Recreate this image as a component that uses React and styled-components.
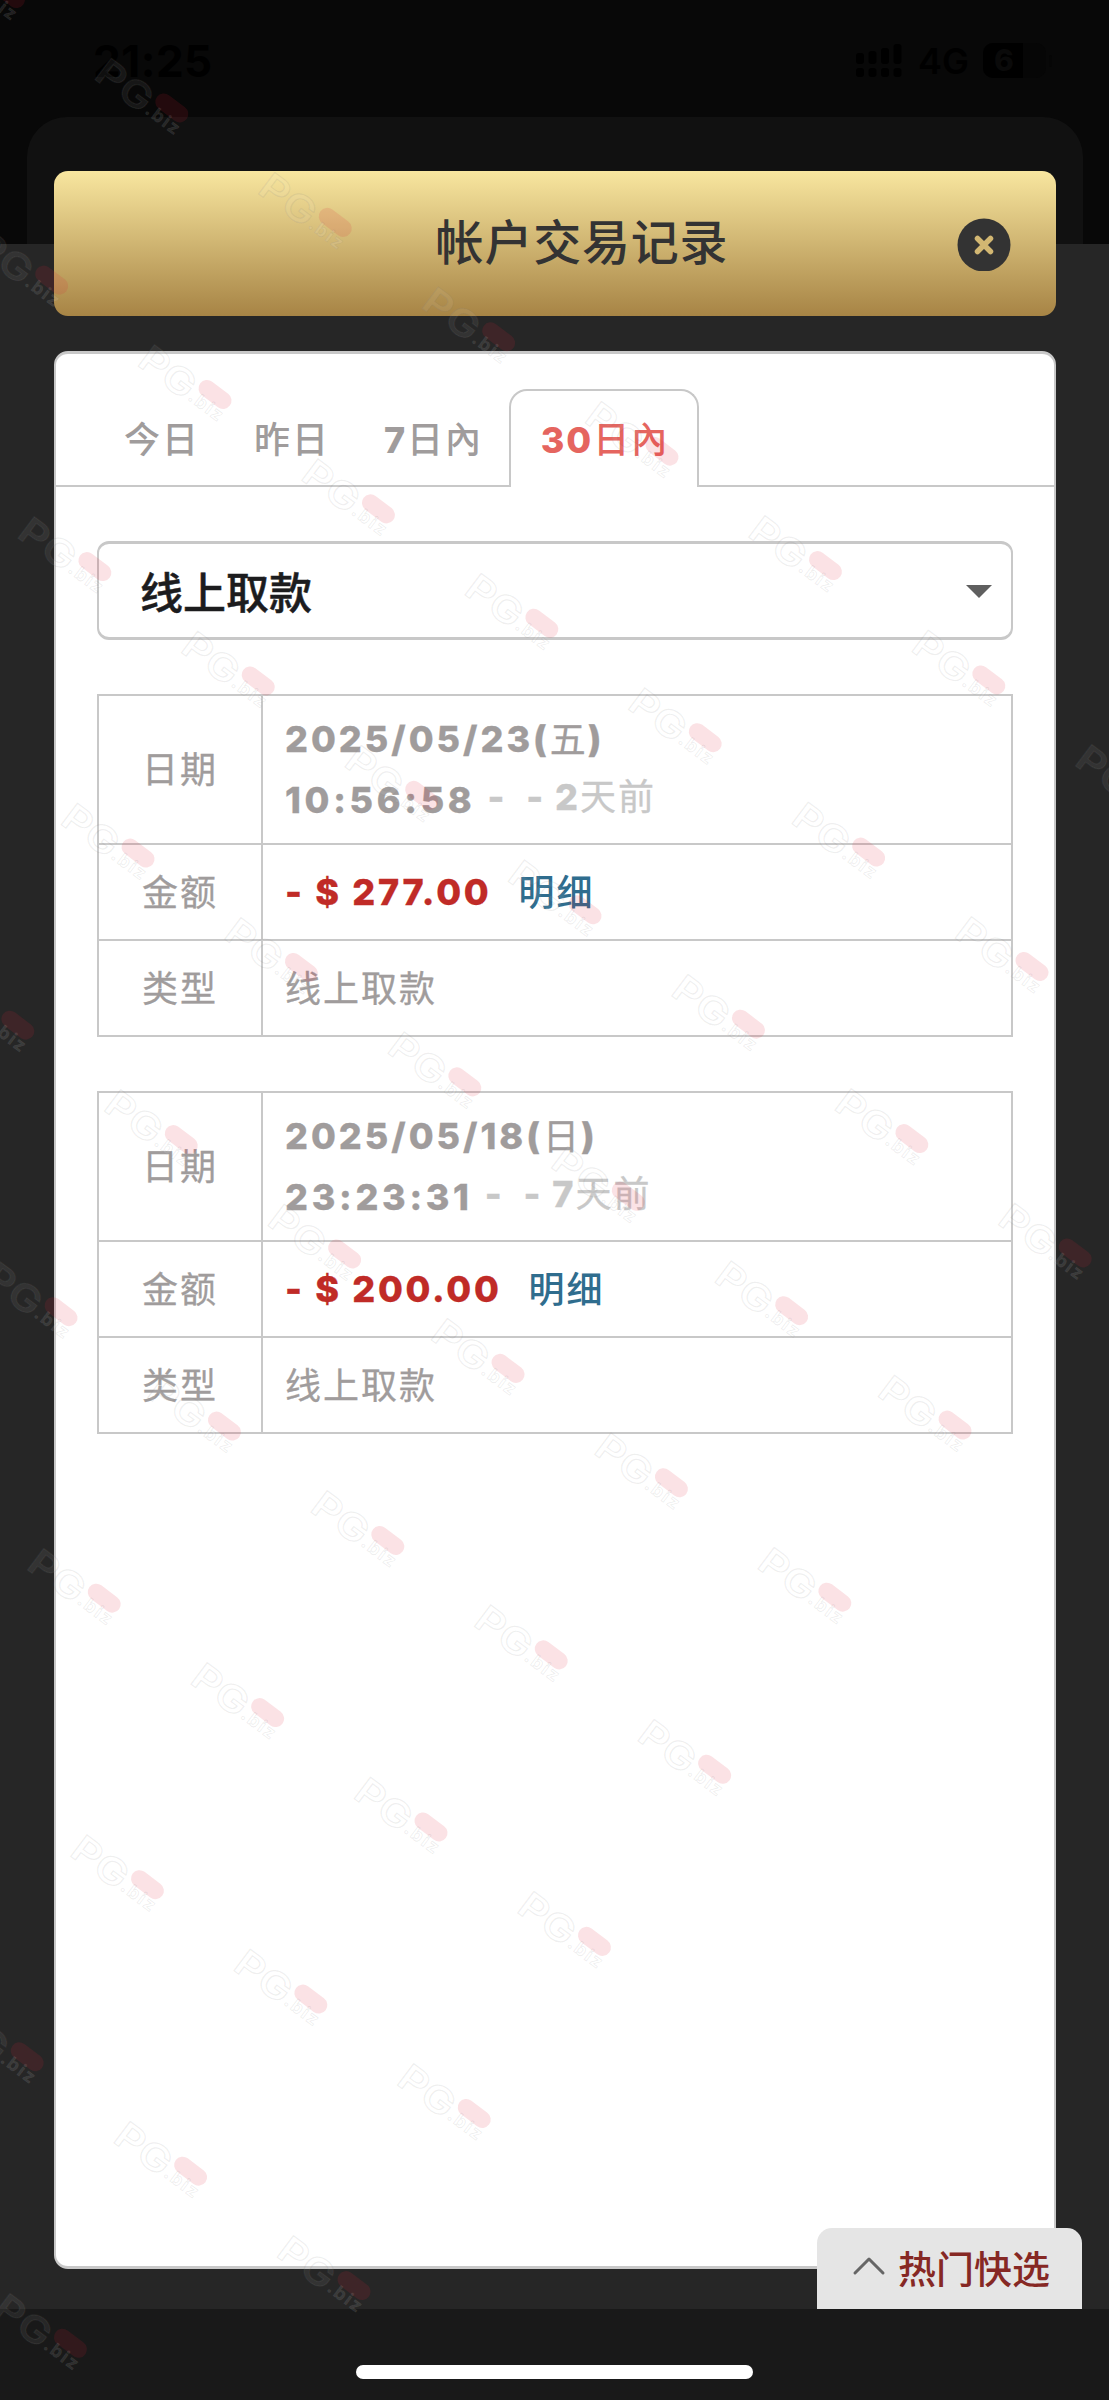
import React, { useState } from 'react'
import styled, { createGlobalStyle } from 'styled-components'

const GlobalStyle = createGlobalStyle`
    * {
        box-sizing: border-box;
    }

    body {
        margin: 0;
        background: #262626;
        font-family: 'Inter', 'Noto Sans CJK SC', sans-serif;
    }

    button {
        margin: 0;
        padding: 0;
        border: none;
        background: none;
        font: inherit;
        color: inherit;
    }
`

const Screen = styled.div`
    position: relative;
    display: flex;
    flex-direction: column;
    width: 1109px;
    height: 2400px;
    overflow: hidden;
    background: linear-gradient(#080808 244px, #262626 244px);
`

const StatusBar = styled.div`
    display: flex;
    justify-content: space-between;
    align-items: center;
    flex: none;
    height: 117px;
    padding: 4px 54px 0 93px;
    color: #000;
`

const Clock = styled.span`
    font-size: 44px;
    font-weight: 700;
    letter-spacing: 0.5px;
`

const StatusRight = styled.div`
    display: flex;
    align-items: center;
    gap: 14px;
    font-size: 36px;
    font-weight: 600;
`

const BackSheet = styled.div`
    flex: none;
    height: 127px;
    margin: 0 26px 0 27px;
    border-radius: 40px 40px 0 0;
    background: #111;
`

const Modal = styled.div`
    position: relative;
    display: flex;
    flex-direction: column;
    flex: none;
    gap: 35px;
    height: 2098px;
    margin: -73px 53px 0 54px;
`

const ModalHeader = styled.div`
    display: grid;
    grid-template-columns: 108px 1fr 54px;
    align-items: center;
    flex: none;
    height: 145px;
    padding: 0 45px;
    border-radius: 14px;
    background: linear-gradient(#f8e69f, #a78445);
    color: #333;
`

const Title = styled.h1`
    grid-column: 2;
    margin: 0 0 1px;
    text-align: center;
    font-size: 48px;
    font-weight: 500;
    line-height: 60px;
    letter-spacing: 0.8px;
`

const CloseButton = styled.button`
    display: flex;
    width: 54px;
    height: 54px;
`

const Panel = styled.div`
    flex: 1;
    border: solid #c8c8c8;
    border-width: 3px 2px;
    border-radius: 14px;
    background: #fff;
`

const Tabs = styled.div`
    display: flex;
    align-items: flex-end;
    height: 133px;
    padding-left: 40px;
    box-shadow: inset 0 -2px #c8c8c8;
`

const Tab = styled.button`
    flex: none;
    width: ${props => props.$width}px;
    height: 98px;
    padding: 0 0 5px 2px;
    border: 2px solid ${props => (props.$active ? '#c8c8c8' : 'transparent')};
    border-bottom: none;
    border-radius: 18px 18px 0 0;
    background: ${props => (props.$active ? '#fff' : 'transparent')};
    color: ${props => (props.$active ? '#e5655f' : '#a09c9c')};
    font-size: 36px;
    font-weight: 500;
    letter-spacing: 2px;
    white-space: nowrap;
`

const Content = styled.div`
    display: flex;
    flex-direction: column;
    gap: 54px;
    padding: 54px 41px;
`

const Select = styled.button`
    display: flex;
    justify-content: space-between;
    align-items: center;
    height: 99px;
    padding: 0 19px 2px 41px;
    border: solid #c8c8c8;
    border-width: 3px 2px;
    border-radius: 12px;
    color: #1c1c1e;
    font-size: 43px;
    font-weight: 500;
    -webkit-text-stroke: 0.5px #1c1c1e;
`

const Caret = styled.span`
    margin-top: 4px;
    border: 13px solid transparent;
    border-top-color: #5f5f5f;
    border-bottom: none;
`

const Record = styled.div`
    display: grid;
    grid-template-columns: 162px 1fr;
    grid-template-rows: 147px 94px 94px;
    gap: 2px;
    border: 2px solid #c8c8c8;
    background: #c8c8c8;
    color: #a09c9c;
    font-size: 36px;
    letter-spacing: 2px;
    -webkit-text-stroke: 0.3px currentColor;
`

const Label = styled.div`
    display: flex;
    justify-content: center;
    align-items: center;
    padding-bottom: 5px;
    background: #fff;
`

const Value = styled.div`
    display: flex;
    flex-direction: column;
    justify-content: center;
    padding-left: 22px;
    background: #fff;
`

const Line = styled.div`
    display: flex;
    align-items: center;
    height: 61px;
    white-space: pre;
`

const Num = styled.span`
    font-weight: 800;
    letter-spacing: ${props => props.$spacing || 2}px;
`

const Cjk = styled.span`
    margin-bottom: 5px;
`

const Ago = styled.span`
    margin: -13px 0 0 12px;
    color: #c8c8c8;
`

const Amount = styled(Num)`
    color: #c02b27;
`

const Detail = styled.a`
    margin: 0 0 4px 27px;
    color: #2f6d8e;
    font-weight: 500;
    -webkit-text-stroke: 0;
`

const Footer = styled.div`
    position: relative;
    flex: 1;
    display: flex;
    justify-content: center;
    padding-top: 56px;
    margin-top: 40px;
    background: #191919;
`

const HomeBar = styled.div`
    width: 397px;
    height: 14px;
    border-radius: 7px;
    background: #fff;
`

/* floats over the lower right corner of the panel */
const HotPicks = styled.button`
    position: absolute;
    right: 27px;
    bottom: 100%;
    display: flex;
    align-items: center;
    gap: 12px;
    width: 265px;
    height: 81px;
    padding: 0 0 5px 35px;
    border-radius: 15px 15px 0 0;
    background: #e5e5e5;
    color: #862824;
    font-size: 38px;
    font-weight: 500;
    white-space: nowrap;
`

const WatermarkLayer = styled.svg`
    position: absolute;
    inset: 0;
    pointer-events: none;
`

const tabs = [
    { num: '', text: '今日', width: 130 },
    { num: '', text: '昨日', width: 130 },
    { num: '7', text: '日內', width: 153 },
    { num: '30', text: '日內', width: 190 },
]

const records = [
    { date: '2025/05/23', day: '五', time: '10:56:58', days: '2', amount: '277.00', type: '线上取款' },
    { date: '2025/05/18', day: '日', time: '23:23:31', days: '7', amount: '200.00', type: '线上取款' },
]

// [row, first column, last column] of the diagonal stamp pattern
const stampRows = [
    [0, -1, 6],
    [1, -1, 5],
    [2, -1, 5],
    [3, -2, 4],
    [4, -2, 3],
    [5, -2, 2],
    [6, -2, 1],
    [7, -2, 0],
    [8, -3, -1],
    [9, -3, -3],
]

const stamps = stampRows.flatMap(([row, from, to]) =>
    Array.from({ length: to - from + 1 }, (_, i) => ({
        x: 94 + row * 43.2 + (from + i) * 163.4,
        y: 57.5 + row * 286.5 + (from + i) * 114.4,
    }))
)

const Watermark = () => (
    <WatermarkLayer width='1109' height='2400' aria-hidden='true'>
        {stamps.map(({ x, y }) => (
            <g key={`${x}-${y}`} transform={`translate(${x + 1} ${y + 22}) rotate(37)`}>
                <text
                    x='-3'
                    fontFamily='Inter'
                    fontSize='37'
                    fontWeight='600'
                    textLength='61'
                    lengthAdjust='spacingAndGlyphs'
                    fill='rgba(255,255,255,0.07)'
                    stroke='rgba(128,128,128,0.13)'
                    strokeWidth='1.2'
                >
                    PG
                </text>
                <rect x='60' y='-32' width='37' height='17' rx='8.5' fill='rgba(225,30,55,0.13)' />
                <text
                    x='59'
                    y='-3'
                    fontFamily='Inter'
                    fontSize='18'
                    fontWeight='700'
                    textLength='38'
                    fill='rgba(255,255,255,0.1)'
                    stroke='rgba(128,128,128,0.15)'
                    strokeWidth='0.8'
                >
                    .biz
                </text>
            </g>
        ))}
    </WatermarkLayer>
)

const SignalIcon = () => (
    <svg width='48' height='34' viewBox='0 0 48 34'>
        {[9, 7, 4, 0].map((top, i) => (
            <g key={top}>
                <rect x={i * 12.5} y={top} width='8' height={20 - top} rx='3' />
                <rect x={i * 12.5} y='24' width='8' height='9' rx='3' />
            </g>
        ))}
    </svg>
)

const BatteryIcon = () => (
    <svg width='72' height='36' viewBox='0 0 72 36'>
        <rect width='63' height='35' rx='10' fill='#060606' />
        <path d='M10 0H40V35H10A10 10 0 0 1 0 25V10A10 10 0 0 1 10 0Z' />
        <rect x='66' y='12' width='3' height='12' rx='1.5' fill='#060606' />
        <text x='11' y='28' fontSize='30' fontWeight='800' fill='#0a0a0a'>6</text>
    </svg>
)

const RecordCard = ({ record }) => (
    <Record>
        <Label>日期</Label>
        <Value>
            <Line>
                <Num $spacing={3}>{record.date}(</Num>
                <Cjk>{record.day}</Cjk>
                <Num>)</Num>
            </Line>
            <Line>
                <Num $spacing={3.7}>{record.time}</Num>
                <Ago><Num>-  - {record.days}</Num>天前</Ago>
            </Line>
        </Value>
        <Label>金额</Label>
        <Value>
            <Line>
                <Amount $spacing={2.7}>- $ {record.amount}</Amount>
                <Detail>明细</Detail>
            </Line>
        </Value>
        <Label>类型</Label>
        <Value>
            <Line>
                <Cjk>{record.type}</Cjk>
            </Line>
        </Value>
    </Record>
)

const App = () => {
    const [active, setActive] = useState(3)

    return (
        <Screen>
            <GlobalStyle />
            <StatusBar>
                <Clock>21:25</Clock>
                <StatusRight>
                    <SignalIcon />
                    4G
                    <BatteryIcon />
                </StatusRight>
            </StatusBar>
            <BackSheet />
            <Modal>
                <ModalHeader>
                    <Title>帐户交易记录</Title>
                    <CloseButton aria-label='close'>
                        <svg width='54' height='54' viewBox='0 0 54 54'>
                            <circle cx='27' cy='28' r='26.5' fill='#333' />
                            <path d='M20.5 21.5l13 13M33.5 21.5l-13 13' stroke='#d2b772' strokeWidth='5.5' strokeLinecap='round' />
                        </svg>
                    </CloseButton>
                </ModalHeader>
                <Panel>
                    <Tabs>
                        {tabs.map((tab, i) => (
                            <Tab key={i} $width={tab.width} $active={i === active} onClick={() => setActive(i)}>
                                {tab.num && <Num>{tab.num}</Num>}{tab.text}
                            </Tab>
                        ))}
                    </Tabs>
                    <Content>
                        <Select>
                            线上取款
                            <Caret />
                        </Select>
                        {records.map(record => (
                            <RecordCard key={record.date} record={record} />
                        ))}
                    </Content>
                </Panel>
            </Modal>
            <Footer>
                <HotPicks>
                    <svg width='34' height='20' viewBox='0 0 34 20'>
                        <path d='M3 17L17 3l14 14' fill='none' stroke='#666' strokeWidth='3' strokeLinecap='round' strokeLinejoin='round' />
                    </svg>
                    热门快选
                </HotPicks>
                <HomeBar />
            </Footer>
            <Watermark />
        </Screen>
    )
}

export default App
